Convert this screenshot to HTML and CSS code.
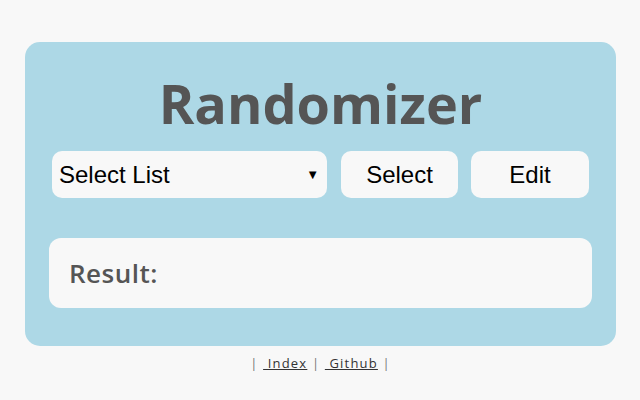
FILE: index.html
```html
<!DOCTYPE html>
<html>
<head>
<meta charset="utf-8">
<link rel="stylesheet" href="styles.css">
</head>
<body>
<div class="card">
  <h1 class="title">Randomizer</h1>
  <div class="controls">
    <div class="select">
      <span>Select List</span>
      <span class="arrow">&#9660;</span>
    </div>
    <button class="btn btn-select">Select</button>
    <button class="btn btn-edit">Edit</button>
  </div>
  <div class="result">Result:</div>
</div>
<div class="footer">| <a href="#">&nbsp;Index</a> | <a href="#">&nbsp;Github</a> |</div>
</body>
</html>
```
FILE: styles.css
```css
html, body {
  margin: 0;
  padding: 0;
  background: #f8f8f8;
}
body {
  padding: 42px 24px 0 25px;
}
.card {
  background: #add8e6;
  border-radius: 15px;
  height: 304px;
  box-sizing: border-box;
  padding: 0 24px 0 24px;
}
.title {
  margin: 0;
  padding-top: 26px;
  height: 83px;
  box-sizing: border-box;
  text-align: center;
  font-family: "Open Sans", sans-serif;
  font-weight: 700;
  font-size: 54px;
  line-height: 70px;
  color: #555555;
}
.controls {
  display: flex;
  margin-top: 26px;
  margin-left: 3px;
  height: 47px;
}
.select {
  width: 275px;
  height: 47px;
  box-sizing: border-box;
  background: #f8f8f8;
  border-radius: 10px;
  display: flex;
  align-items: center;
  justify-content: space-between;
  padding: 0 8px 0 7px;
  font-family: "Liberation Sans", Arial, sans-serif;
  font-size: 24px;
  color: #000;
}
.arrow {
  font-size: 13px;
}
.btn {
  border: none;
  background: #f8f8f8;
  border-radius: 10px;
  height: 47px;
  width: 117px;
  font-family: "Liberation Sans", Arial, sans-serif;
  font-size: 24px;
  color: #000;
  padding: 0;
}
.btn-select {
  margin-left: 14px;
}
.btn-edit {
  margin-left: 13px;
  width: 118px;
}
.result {
  margin-top: 40px;
  height: 70px;
  width: 543px;
  box-sizing: border-box;
  background: #f8f8f8;
  border-radius: 12px;
  padding-left: 20px;
  display: flex;
  align-items: center;
  font-family: "Open Sans", sans-serif;
  font-weight: 600;
  font-size: 26px;
  letter-spacing: 0.5px;
  color: #555555;
}
.footer {
  text-align: center;
  padding-top: 8px;
  font-family: "Open Sans", sans-serif;
  font-size: 13px;
  color: #777;
  letter-spacing: 1.2px;
}
.footer a {
  color: #333;
  text-decoration: underline;
}
```
